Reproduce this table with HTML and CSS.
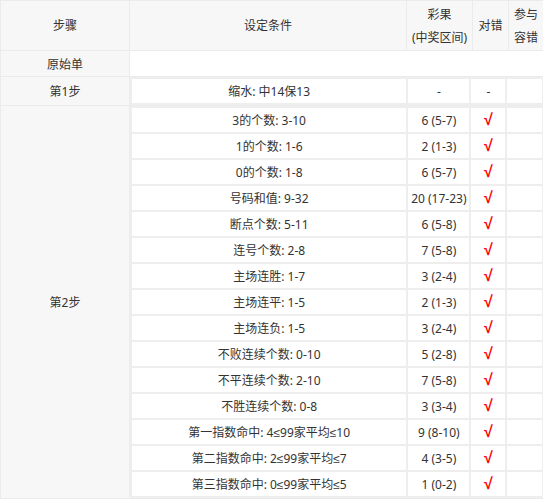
FILE: index.html
```html
<!DOCTYPE html>
<html lang="zh-CN">
<head>
<meta charset="utf-8">
<title>缩水步骤</title>
<link rel="stylesheet" href="styles.css">
</head>
<body>
<table class="plan">
  <colgroup>
    <col class="c-step"><col class="c-cond"><col class="c-res"><col class="c-ok"><col class="c-tol">
  </colgroup>
  <thead>
    <tr>
      <th>步骤</th>
      <th>设定条件</th>
      <th>彩果<br>(中奖区间)</th>
      <th>对错</th>
      <th>参与<br>容错</th>
    </tr>
  </thead>
  <tbody>
    <tr class="origin">
      <td class="step">原始单</td>
      <td class="blank" colspan="4"></td>
    </tr>
    <tr>
      <td class="step">第1步</td>
      <td class="holder" colspan="4">
        <table class="cond">
          <colgroup><col class="n-cond"><col class="n-res"><col class="n-ok"><col class="n-tol"></colgroup>
          <tr><td>缩水: 中14保13</td><td>-</td><td>-</td><td></td></tr>
        </table>
      </td>
    </tr>
    <tr>
      <td class="step">第2步</td>
      <td class="holder" colspan="4">
        <table class="cond">
          <colgroup><col class="n-cond"><col class="n-res"><col class="n-ok"><col class="n-tol"></colgroup>
          <tr><td>3的个数: 3-10</td><td>6 (5-7)</td><td class="ok">√</td><td></td></tr>
          <tr><td>1的个数: 1-6</td><td>2 (1-3)</td><td class="ok">√</td><td></td></tr>
          <tr><td>0的个数: 1-8</td><td>6 (5-7)</td><td class="ok">√</td><td></td></tr>
          <tr><td>号码和值: 9-32</td><td>20 (17-23)</td><td class="ok">√</td><td></td></tr>
          <tr><td>断点个数: 5-11</td><td>6 (5-8)</td><td class="ok">√</td><td></td></tr>
          <tr><td>连号个数: 2-8</td><td>7 (5-8)</td><td class="ok">√</td><td></td></tr>
          <tr><td>主场连胜: 1-7</td><td>3 (2-4)</td><td class="ok">√</td><td></td></tr>
          <tr><td>主场连平: 1-5</td><td>2 (1-3)</td><td class="ok">√</td><td></td></tr>
          <tr><td>主场连负: 1-5</td><td>3 (2-4)</td><td class="ok">√</td><td></td></tr>
          <tr><td>不败连续个数: 0-10</td><td>5 (2-8)</td><td class="ok">√</td><td></td></tr>
          <tr><td>不平连续个数: 2-10</td><td>7 (5-8)</td><td class="ok">√</td><td></td></tr>
          <tr><td>不胜连续个数: 0-8</td><td>3 (3-4)</td><td class="ok">√</td><td></td></tr>
          <tr><td>第一指数命中: 4≤99家平均≤10</td><td>9 (8-10)</td><td class="ok">√</td><td></td></tr>
          <tr><td>第二指数命中: 2≤99家平均≤7</td><td>4 (3-5)</td><td class="ok">√</td><td></td></tr>
          <tr><td>第三指数命中: 0≤99家平均≤5</td><td>1 (0-2)</td><td class="ok">√</td><td></td></tr>
        </table>
      </td>
    </tr>
  </tbody>
</table>
</body>
</html>
```

FILE: styles.css
```css
html, body {
  margin: 0;
  padding: 0;
  background: #fff;
}

body {
  font-family: "Noto Sans", "Liberation Sans", "Noto Sans CJK SC", sans-serif;
  font-size: 12px;
  color: #333;
}

.plan {
  width: 543px;
  border-collapse: collapse;
  table-layout: fixed;
}

.c-step { width: 129px; }
.c-cond { width: 277px; }
.c-res { width: 66px; }
.c-ok { width: 36px; }
.c-tol { width: 35px; }

.plan th,
.plan > tbody > tr > td {
  border: 1px solid #ebebeb;
  padding: 0;
  text-align: center;
  vertical-align: middle;
}

.plan th {
  height: 49px;
  background: #f7f7f7;
  font-weight: normal;
  line-height: 23px;
}

.plan > tbody > tr > td.step {
  background: #f7f7f7;
}

.origin td {
  height: 25px;
}

.plan > tbody > tr > td.holder {
  background: #eee;
  border-right: none;
}

.cond {
  width: 100%;
  border-collapse: separate;
  border-spacing: 2px;
  table-layout: fixed;
  background: #eee;
}

.n-cond { width: 274px; }
.n-res { width: 61px; }
.n-ok { width: 34px; }
.n-tol { width: 34px; }

.cond td {
  height: 24px;
  padding: 0;
  background: #fff;
  text-align: center;
  vertical-align: middle;
  white-space: nowrap;
}

.cond td.ok {
  color: #f00;
  font-family: "Liberation Sans", sans-serif;
  font-weight: bold;
  font-size: 16px;
}
```
